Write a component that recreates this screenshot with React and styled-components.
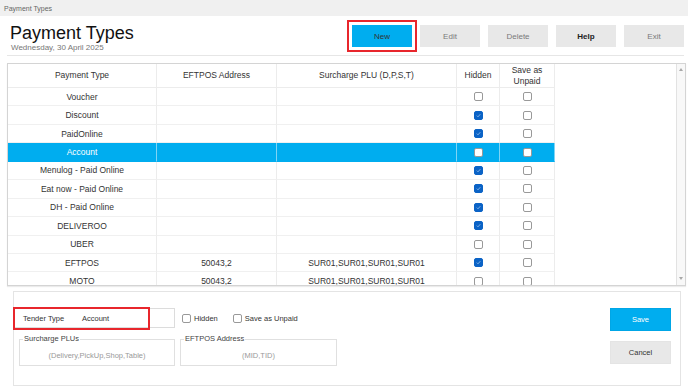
import React from "react";
import styled, { createGlobalStyle } from "styled-components";

const Global = createGlobalStyle`
  html, body { margin: 0; padding: 0; }
  body {
    width: 688px; height: 387px; overflow: hidden; background: #fff;
    font-family: "Liberation Sans", Arial, sans-serif; color: #333;
  }
  * { box-sizing: border-box; }
`;

const Page = styled.div`
  width: 688px; height: 387px; display: flex; flex-direction: column; background: #fff;
`;

const TitleBar = styled.div`
  height: 16px; background: #f0f0f0; font-size: 7px; color: #666;
  padding-left: 4px; display: flex; align-items: center;
`;

const Header = styled.div`
  height: 40px; margin: 0 4px 0 7px; padding-left: 3px;
  border-bottom: 1px solid #e6e6e6; display: flex; justify-content: space-between;
`;

const TitleBlock = styled.div`
  padding-top: 7px; display: flex; flex-direction: column;
`;

const Title = styled.div`
  font-size: 18px; line-height: 20px; color: #111;
`;

const DateText = styled.div`
  font-size: 8px; color: #777; margin-left: 1px;
`;

const ButtonRow = styled.div`
  display: flex; gap: 8px; padding-top: 9px;
`;

const TopButton = styled.div`
  width: 60px; height: 22px; display: flex; align-items: center; justify-content: center;
  font-size: 8px; background: ${p => (p.$primary ? "#00adef" : "#e8e8e8")};
  color: ${p => (p.$primary ? "#333" : p.$strong ? "#222" : "#7a7a7a")};
  font-weight: ${p => (p.$strong ? "bold" : "normal")};
  outline: ${p => (p.$highlight ? "2px solid #e8262c" : "none")};
  outline-offset: 3px;
`;

const TableFrame = styled.div`
  margin: 7px 2px 0 7px; height: 223px; border: 1px solid #d4d4d4;
  box-shadow: 0 1px 1px rgba(0,0,0,0.08);
  display: flex; overflow: hidden;
`;

const TableArea = styled.div`
  flex: 1; overflow: hidden;
`;

const Grid = styled.div`
  display: grid;
  grid-template-columns: 149px 120px 180px 43px 55px;
  grid-template-rows: 24px;
  grid-auto-rows: 18.45px;
  width: 547px;
`;

const HeadCell = styled.div`
  display: flex; align-items: center; justify-content: center; text-align: center;
  font-size: 8.5px; line-height: 10.5px; color: #333;
  border-right: 1px solid #ececec; border-bottom: 1px solid #ececec;
`;

const Cell = styled.div`
  display: flex; align-items: center; justify-content: center;
  font-size: 8.5px; white-space: nowrap;
  background: ${p => (p.$sel ? "#00adef" : "#fff")};
  color: ${p => (p.$sel ? "#fff" : "#333")};
  border-right: 1px solid ${p => (p.$sel ? "#7fd4f5" : "#ececec")};
  border-bottom: 1px solid ${p => (p.$sel ? "#00adef" : "#f0f0f0")};
`;

const Box = styled.span`
  width: 9px; height: 9px; border-radius: 2px; display: inline-flex;
  align-items: center; justify-content: center;
  border: 1px solid ${p => (p.$checked ? "#0b63c6" : "#999")};
  background: ${p => (p.$checked ? "#0b63c6" : "#fff")};
`;

const Scrollbar = styled.div`
  width: 9px; border-left: 1px solid #e2e2e2; background: #f8f8f8;
  display: flex; flex-direction: column; justify-content: space-between; align-items: center;
  padding: 4px 0 5px;
`;

const Arrow = styled.div`
  width: 0; height: 0; border-left: 2.5px solid transparent; border-right: 2.5px solid transparent;
  ${p => (p.$up ? "border-bottom: 3px solid #a8a8a8;" : "border-top: 3px solid #a8a8a8;")}
`;

const Panel = styled.div`
  margin: 5px 7px 0 13px; height: 95px; border: 1px solid #e4e4e4;
  display: flex; justify-content: space-between;
`;

const PanelLeft = styled.div`
  display: flex; flex-direction: column; padding-top: 16px;
`;

const FieldRow = styled.div`
  display: flex; align-items: center; margin-left: -1px;
`;

const TenderInput = styled.div`
  width: 162px; height: 20px; border: 1px solid #dcdcdc; position: relative;
  display: flex; align-items: center; font-size: 7.5px; color: #333;
`;

const RedFrame = styled.div`
  position: absolute; left: -1px; top: -2px; width: 137px; height: 23px;
  border: 2px solid #e8262c;
`;

const Label = styled.span`
  margin-left: 9px; width: 59px;
`;

const CheckLabel = styled.label`
  display: flex; align-items: center; gap: 3px; font-size: 7.5px; color: #333;
  margin-left: ${p => p.$ml}px;
`;

const FieldsetRow = styled.div`
  display: flex; gap: 5px; margin-top: 7px; margin-left: 5px;
`;

const Fieldset = styled.fieldset`
  margin: 0; width: ${p => p.$w}px; height: 31px; border: 1px solid #e0e0e0;
  padding: 0; display: flex; align-items: center; justify-content: center;
  legend {
    font-size: 7.5px; color: #444; padding: 0 1px; margin-left: 3px; line-height: 8px;
  }
`;

const Placeholder = styled.span`
  font-size: 7.5px; color: #999; margin-top: 2px;
`;

const PanelRight = styled.div`
  display: flex; flex-direction: column; gap: 10px; padding: 16px 9px 0 0;
`;

const ActionButton = styled.div`
  width: 61px; height: 23px; display: flex; align-items: center; justify-content: center;
  font-size: 7.5px; background: ${p => (p.$primary ? "#00adef" : "#e8e8e8")};
  color: ${p => (p.$primary ? "#fff" : "#333")};
  border: 1px solid ${p => (p.$primary ? "#00a6e6" : "#e4e4e4")};
`;

function Check({ checked }) {
  return (
    <Box $checked={checked}>
      {checked && (
        <svg width="5" height="5" viewBox="0 0 5 5">
          <path d="M0.8 2.6 L2 3.8 L4.3 1.2" stroke="#9fc4ee" strokeWidth="0.8" fill="none" />
        </svg>
      )}
    </Box>
  );
}

const rows = [
  ["Voucher", "", "", false, false],
  ["Discount", "", "", true, false],
  ["PaidOnline", "", "", true, false],
  ["Account", "", "", false, false, true],
  ["Menulog - Paid Online", "", "", true, false],
  ["Eat now - Paid Online", "", "", true, false],
  ["DH - Paid Online", "", "", true, false],
  ["DELIVEROO", "", "", true, false],
  ["UBER", "", "", false, false],
  ["EFTPOS", "50043,2", "SUR01,SUR01,SUR01,SUR01", true, false],
  ["MOTO", "50043,2", "SUR01,SUR01,SUR01,SUR01", false, false],
];

export default function App() {
  return (
    <Page>
      <Global />
      <TitleBar>Payment Types</TitleBar>
      <Header>
        <TitleBlock>
          <Title>Payment Types</Title>
          <DateText>Wednesday, 30 April 2025</DateText>
        </TitleBlock>
        <ButtonRow>
          <TopButton $primary $highlight>New</TopButton>
          <TopButton>Edit</TopButton>
          <TopButton>Delete</TopButton>
          <TopButton $strong>Help</TopButton>
          <TopButton>Exit</TopButton>
        </ButtonRow>
      </Header>
      <TableFrame>
        <TableArea>
          <Grid>
            <HeadCell>Payment Type</HeadCell>
            <HeadCell>EFTPOS Address</HeadCell>
            <HeadCell>Surcharge PLU (D,P,S,T)</HeadCell>
            <HeadCell>Hidden</HeadCell>
            <HeadCell>Save as<br />Unpaid</HeadCell>
            {rows.map((r, i) => (
              <React.Fragment key={i}>
                <Cell $sel={r[5]}>{r[0]}</Cell>
                <Cell $sel={r[5]}>{r[1]}</Cell>
                <Cell $sel={r[5]}>{r[2]}</Cell>
                <Cell $sel={r[5]}><Check checked={r[3]} /></Cell>
                <Cell $sel={r[5]}><Check checked={r[4]} /></Cell>
              </React.Fragment>
            ))}
          </Grid>
        </TableArea>
        <Scrollbar>
          <Arrow $up />
          <Arrow />
        </Scrollbar>
      </TableFrame>
      <Panel>
        <PanelLeft>
          <FieldRow>
            <TenderInput>
              <RedFrame />
              <Label>Tender Type</Label>
              <span>Account</span>
            </TenderInput>
            <CheckLabel $ml={7}><Check checked={false} />Hidden</CheckLabel>
            <CheckLabel $ml={15}><Check checked={false} />Save as Unpaid</CheckLabel>
          </FieldRow>
          <FieldsetRow>
            <Fieldset $w={156}>
              <legend>Surcharge PLUs</legend>
              <Placeholder>(Delivery,PickUp,Shop,Table)</Placeholder>
            </Fieldset>
            <Fieldset $w={157}>
              <legend>EFTPOS Address</legend>
              <Placeholder>(MID,TID)</Placeholder>
            </Fieldset>
          </FieldsetRow>
        </PanelLeft>
        <PanelRight>
          <ActionButton $primary>Save</ActionButton>
          <ActionButton>Cancel</ActionButton>
        </PanelRight>
      </Panel>
    </Page>
  );
}
